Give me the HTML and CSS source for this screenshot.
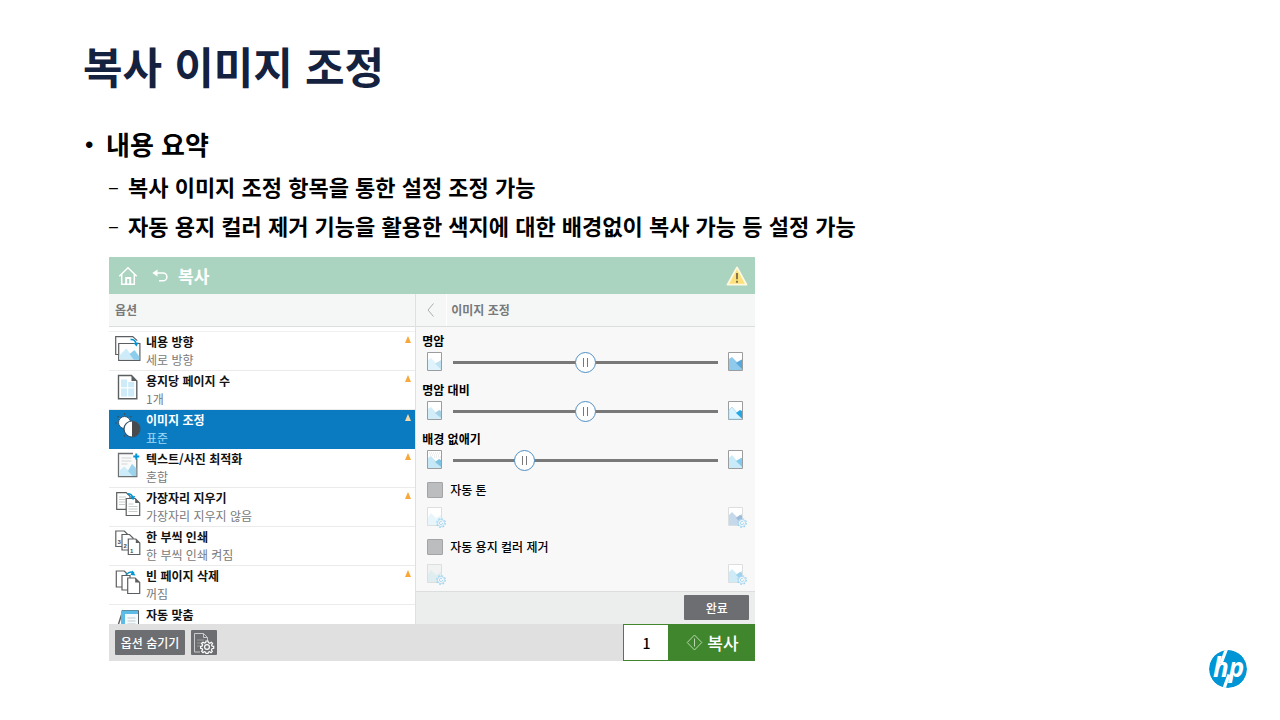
FILE: index.html
```html
<!DOCTYPE html>
<html lang="ko">
<head>
<meta charset="utf-8">
<title>복사 이미지 조정</title>
<link rel="stylesheet" href="styles.css">
</head>
<body>
<svg class="defs" aria-hidden="true">
  <symbol id="gear" viewBox="0 0 10 10">
    <circle cx="5" cy="5" r="4.3" fill="none" stroke="#9bd3f0" stroke-width="1.2" stroke-dasharray="1.7 1.68"/>
    <circle cx="5" cy="5" r="3.5" fill="#f8f8f8" stroke="#9bd3f0" stroke-width=".7"/>
    <circle cx="5" cy="5" r="1.6" fill="none" stroke="#9bd3f0" stroke-width=".8" stroke-dasharray="8 2"/>
  </symbol>
</svg>
<main class="slide">
  <h1 class="title">복사 이미지 조정</h1>
  <ul class="outline">
    <li class="topic">내용 요약</li>
    <li>
      <ul class="points">
        <li class="point">복사 이미지 조정 항목을 통한 설정 조정 가능</li>
        <li class="point">자동 용지 컬러 제거 기능을 활용한 색지에 대한 배경없이 복사 가능 등 설정 가능</li>
      </ul>
    </li>
  </ul>

  <section class="panel">
    <header class="topbar">
      <button class="plain" aria-label="홈">
        <svg width="20" height="20" viewBox="0 0 20 20" fill="none" stroke="#fff" stroke-width="1.5"><path d="M1.3 10.2 10 1.8l8.700 8.400M3.700 8.500v9.700h12.600V8.500"/><path d="M8.200 18v-6h4v6" stroke-width="2"/></svg>
      </button>
      <button class="plain" aria-label="뒤로">
        <svg width="16" height="14" viewBox="0 0 16 14"><path d="M4 4h7a3.900 3.900 0 0 1 0 7.800H7" fill="none" stroke="#fff" stroke-width="1.500"/><path d="M5.500.500v7L.300 4z" fill="#fff"/></svg>
      </button>
      <h2 class="topbar-title">복사</h2>
      <svg class="alert" width="22" height="20" viewBox="0 0 22 20"><path d="M11 1.500 20.500 18.700h-19z" fill="#fde17c" stroke="#fff8dc" stroke-width="1.800" stroke-linejoin="round"/><path d="M11 7v6.200M11 14.700v2" stroke="#7a6a45" stroke-width="1.800"/></svg>
    </header>

    <div class="columns">
      <div class="left">
        <h3 class="subhead">옵션</h3>
        <ul class="options">
          <li><button class="option"><svg class="icon" viewBox="0 0 26 32"><g stroke="#5c5f61" stroke-width="1.200"><path d="M3.500 19.500H.700V1.600h17l4.500 4" fill="#fff"/><path d="M3.700 8.500h21.200v16.800H3.700z" fill="#fff"/></g><path d="m4.400 20.500 7-7 8 11.100h-15z" fill="#cdebf8"/><path d="m14.500 19 5-4 4.800 6.500v3.200h-5.500z" fill="#8ecdeb"/><path d="M15.500 4.500q4.500-.500 5.500 4" fill="none" stroke="#0096d6" stroke-width="1.500"/><path d="m18.500 8 5-.500-2 4z" fill="#0096d6"/></svg>
            <span class="option-text"><b>내용 방향</b><span>세로 방향</span></span><i class="mark"></i></button></li>
          <li><button class="option"><svg class="icon" viewBox="0 0 26 32"><path d="M3.500 1.500h13l5.300 5.500v17.800H3.500z" fill="#fff" stroke="#5c5f61" stroke-width="1.400"/><path d="M16.500 1.500V7h5.300z" fill="#5c5f61"/><path d="M6 5.500h6v7.800H6zM13.200 8h6v5.300h-6zM6 14.500h6v8H6zM13.200 14.500h6v8h-6z" fill="#cdebf8"/></svg>
            <span class="option-text"><b>용지당 페이지 수</b><span>1개</span></span><i class="mark"></i></button></li>
          <li><button class="option selected"><svg class="icon" viewBox="0 0 26 32"><path d="M9.500 0v24M0 10h20M2.500 3l14 14M16.500 3l-14 14" stroke="#34536a" stroke-width="1.200" stroke-dasharray="2 20"/><circle cx="9.500" cy="9.500" r="6" fill="#fff" stroke="#34536a"/><circle cx="17" cy="16" r="8" fill="#fff" stroke="#34536a" stroke-width="1.200"/><path d="M17 8a8 8 0 0 1 0 16z" fill="#484b4d"/></svg>
            <span class="option-text"><b>이미지 조정</b><span>표준</span></span><i class="mark"></i></button></li>
          <li><button class="option"><svg class="icon" viewBox="0 0 26 32"><path d="M18 1.500H3.500v23.200h18.300V7" fill="#fafafa" stroke="#6d7072" stroke-width="1.300"/><path d="M6.500 6h10M6.500 9h10M6.500 12h6" stroke="#d2d5d6"/><path d="m4.200 19 5-4.500 4 4 4-6.500 4 4v8h-17z" fill="#cdebf8"/><path d="m13 19 4-7 4 4.500v7.500h-3.500z" fill="#9bd3ee"/><path d="M21.300 1.500v6M18.300 4.500h6" stroke="#0096d6" stroke-width="2"/></svg>
            <span class="option-text"><b>텍스트/사진 최적화</b><span>혼합</span></span><i class="mark"></i></button></li>
          <li><button class="option"><svg class="icon" viewBox="0 0 26 32"><g fill="#fff" stroke="#5c5f61" stroke-width="1.200"><path d="M1.700 1.600h9.500l3.800 3.700v13H1.700z"/><path d="M11.200 7.500h9l4.500 4.500v12.500H11.200z"/></g><path d="M20.200 7.500V12h4.500z" fill="#5c5f61"/><path d="M4 6h7M4 8.500h6M4 11h6M4 13.500h6M13.500 13h5M13.500 15.500h9M13.500 18h9M13.500 20.500h9" stroke="#c9cccd"/><path d="M12.500 2.800q4.500 0 5.200 3.800" fill="none" stroke="#0096d6" stroke-width="1.500"/><path d="m15 5.500 5.200-.500-2 4.200z" fill="#0096d6"/></svg>
            <span class="option-text"><b>가장자리 지우기</b><span>가장자리 지우지 않음</span></span><i class="mark"></i></button></li>
          <li><button class="option"><svg class="icon" viewBox="0 0 26 32"><g fill="#fff" stroke="#5c5f61" stroke-width="1.200"><path d="M.800 1h8.500l3 3v12.500H.800z"/><path d="M7 4.500h7.500l3.500 3.500v12H7z"/><path d="M13.300 9h7.500l4 4v11.500H13.300z"/></g><path d="M20.800 9v4h4z" fill="#5c5f61"/><g class="digits"><text x="2.500" y="14">3</text><text x="8.500" y="18">2</text><text x="15" y="22.500">1</text></g></svg>
            <span class="option-text"><b>한 부씩 인쇄</b><span>한 부씩 인쇄 켜짐</span></span></button></li>
          <li><button class="option"><svg class="icon" viewBox="0 0 26 32"><g fill="#fff" stroke="#5c5f61" stroke-width="1.200"><path d="M1.300 2h8l2 2v14h-10z"/><path d="M7 6.500h8v14.500H7z"/><path d="M12.700 9h7.500l4.500 4.500v11h-12z"/></g><path d="M20.200 9v4.500h4.500z" fill="#5c5f61"/><path d="M11.500 5.500q3.500-4 7.500-1.500" fill="none" stroke="#0096d6" stroke-width="1.500"/><path d="m17.500 1.500 3 5-5-.500z" fill="#0096d6"/></svg>
            <span class="option-text"><b>빈 페이지 삭제</b><span>꺼짐</span></span><i class="mark"></i></button></li>
          <li><button class="option"><svg class="icon" viewBox="0 0 26 32"><path d="M1 24 8 2" stroke="#5c5f61" stroke-width="1.400"/><path d="M7.500 2.500h16v22h-16z" fill="#f4fbfe" stroke="#5c5f61"/><path d="M6 2.500h17v3.500H10v18H6z" fill="#5bbce8"/><path d="M12.500 10h8M12.500 13h8M12.500 16h8" stroke="#c3c7c9"/></svg>
            <span class="option-text"><b>자동 맞춤</b></span></button></li>
        </ul>
      </div>

      <div class="right">
        <div class="subhead">
          <button class="back" aria-label="이전"><svg width="8" height="14" viewBox="0 0 8 14"><path d="M6.500.500 1 7l5.500 6.500" fill="none" stroke="#aaadaf"/></svg></button>
          <h3 class="subhead-title">이미지 조정</h3>
        </div>
        <div class="settings">
          <div class="setting">
            <label for="light">명암</label>
            <div class="slide-row">
              <svg class="pic" viewBox="0 0 16 20"><path d="M.500.500h14v18H.500z" class="page"/><path d="m1 8 3-2 5 5 2-1 3-1v9H1z" fill="#e0f3fc"/><path d="m8 11.500 3-1.500 3-2v9.500z" fill="#c0e2f2"/></svg>
              <input id="light" type="range" min="0" max="100" value="50">
              <svg class="pic" viewBox="0 0 16 20"><path d="M.500.500h14v18H.500z" class="page"/><path d="m1 7 3-2 5 5 5-2v10H1z" fill="#8fc9ec"/><path d="m8 11 4-2.500 2-1V17z" fill="#57a9dc"/></svg>
            </div>
          </div>
          <div class="setting">
            <label for="contrast">명암 대비</label>
            <div class="slide-row">
              <svg class="pic" viewBox="0 0 16 20"><path d="M.500.500h14v18H.500z" class="page"/><path d="m1 8 3-2 10 11v1H1z" fill="#d2edf8"/><path d="m8 12 4-3 2 1v7z" fill="#a5d1e7"/></svg>
              <input id="contrast" type="range" min="0" max="100" value="50">
              <svg class="pic" viewBox="0 0 16 20"><path d="M.500.500h14v18H.500z" class="page"/><path d="m1 9 3-3 10 12H1z" fill="#d9f3ff" stroke="#9bd7f3" stroke-width=".700"/><path d="m8 12 4-3 2 1v7.500z" fill="#23a7e5"/></svg>
            </div>
          </div>
          <div class="setting">
            <label for="background">배경 없애기</label>
            <div class="slide-row">
              <svg class="pic" viewBox="0 0 16 20"><path d="M.500.500h14v18H.500z" class="page"/><path d="M2 3h11M3 5h10M7 7h7" stroke="#dedede" stroke-dasharray="1 1"/><path d="m1 8 3-2 10 11v1H1z" fill="#c5e8f7"/><path d="m8 12 4-3 2 1v7z" fill="#7fc3e2"/></svg>
              <input id="background" type="range" min="0" max="100" value="25">
              <svg class="pic" viewBox="0 0 16 20"><path d="M.500.500h14v18H.500z" class="page"/><path d="m1 8 3-3 10 12v1H1z" fill="#c9eaf9"/><path d="m8 11 5-3 1 0v9z" fill="#83cbec"/></svg>
            </div>
          </div>
          <div class="check">
            <label class="check-label"><input type="checkbox">자동 톤</label>
            <div class="pair">
              <svg class="pic" viewBox="0 0 16 20"><path d="M.500.500h14v18H.500z" class="page faint"/><path d="m1 10 3-4 5 5 5-3v10H1z" fill="#e8f5fa"/><use href="#gear" x="9" y="11" width="10" height="10"/></svg>
              <svg class="pic" viewBox="0 0 16 20"><path d="M.500.500h14v18H.500z" class="page faint"/><path d="m1 8 3-3 5 5 5-3v11H1z" fill="#c6d9ea"/><path d="m8 11 4-3 2 1v8z" fill="#9dbada"/><use href="#gear" x="9" y="11" width="10" height="10"/></svg>
            </div>
          </div>
          <div class="check">
            <label class="check-label"><input type="checkbox">자동 용지 컬러 제거</label>
            <div class="pair">
              <svg class="pic" viewBox="0 0 16 20"><path d="M.500.500h14v18H.500z" class="page faint tint"/><path d="m1 10 3-4 5 5 5-3v10H1z" fill="#dfecf0"/><use href="#gear" x="9" y="11" width="10" height="10"/></svg>
              <svg class="pic" viewBox="0 0 16 20"><path d="M.500.500h14v18H.500z" class="page faint"/><path d="m1 8 3-3 5 5 5-3v11H1z" fill="#cfebf8"/><path d="m8 11 4-3 2 1v8z" fill="#9cd2ee"/><use href="#gear" x="9" y="11" width="10" height="10"/></svg>
            </div>
          </div>
        </div>
        <div class="done-bar"><button class="dark done">완료</button></div>
      </div>
    </div>

    <footer class="bottombar">
      <div class="tools">
        <button class="dark hide">옵션 숨기기</button>
        <button class="dark gear-button" aria-label="설정">
          <svg width="22" height="22" viewBox="0 0 22 22" fill="none" stroke="#fff"><path d="M7 20H1.500V1.500h9l4 4V9M10.500 1.500v4h4" stroke="#c9cacb"/><path d="M4 8h7M4 11h5M4 14h3" stroke="#98999b"/><g transform="translate(14 15)"><path d="M-1-6h2l.400 1.600 1.400.600L4.300-4.800 5.600-3.400 4.600-2l.500 1.200L6.700-.600v1.900l-1.700.400L4.400 3l.900 1.400L4 5.700l-1.400-1L1.300 5.200 1 6.500h-2l-.300-1.400-1.300-.500-1.400 1-1.400-1.400 1-1.300-.600-1.300-1.400-.300v-1.900L-4.900-.900l.500-1.200-1-1.500L-4-4.800l1.400.900 1.300-.500z" fill="#6d6e71" stroke-width="1.200"/><circle r="2.400" stroke-width="1.200"/></g></svg>
        </button>
      </div>
      <input class="copies" type="text" value="1" aria-label="매수">
      <button class="start"><svg width="17" height="17" viewBox="0 0 17 17" fill="none" stroke="#b9d8b2"><path d="m8.500 1 7.300 7.500-7.300 7.500-7.300-7.500zM8.500 4.500v8"/></svg>복사</button>
    </footer>
  </section>

  <svg class="logo" width="38" height="38" viewBox="0 0 38 38" role="img" aria-label="hp">
    <circle cx="19" cy="19" r="19" fill="#0096d6"/>
    <path d="M17.500-1 12 13.500M20 24.500 14.800 39" stroke="#fff" stroke-width="3.200"/>
    <text x="4" y="27">hp</text>
  </svg>
</main>
</body>
</html>
```
FILE: styles.css
```css
* { box-sizing: border-box; }
body {
  margin: 0;
  background: #fff;
  color: #000;
  font-family: "Noto Sans CJK KR", sans-serif;
}
h1, h2, h3, ul { margin: 0; padding: 0; }
ul { list-style: none; }
button, input { font-family: inherit; }
button { border: 0; padding: 0; cursor: pointer; }
svg { flex: none; display: block; }
.defs { display: none; }

.slide {
  position: relative;
  min-height: 100vh;
  padding: 35px 33px 32px 83px;
}
.title {
  font-size: 43px;
  line-height: 60px;
  font-weight: 700;
  color: #14213f;
}
.outline { padding-top: 29px; }
.topic, .point { display: flex; font-weight: 700; }
.topic { font-size: 26px; line-height: 40px; }
.topic::before { content: "•"; width: 21px; padding: 2px 0 0 2px; font-family: "Liberation Sans", sans-serif; font-size: 24px; line-height: 38px; font-weight: 400; }
.point { font-size: 22px; line-height: 39px; }
.points { padding: 3px 0 0 26px; }
.point::before { content: "–"; width: 19px; padding-top: 3px; font-family: "Liberation Sans", sans-serif; font-size: 16px; line-height: 36px; font-weight: 400; }

.panel {
  width: 50.5vw;
  min-width: 480px;
  margin: 12px 0 0 26px;
  font-size: 12px;
  line-height: 18px;
}
.topbar {
  display: flex;
  align-items: center;
  height: 37px;
  padding: 0 7px 0 9px;
  gap: 14px;
  background: #abd4c0;
  color: #fff;
}
.plain { background: none; }
.topbar-title { flex: 1; font-size: 17px; line-height: 24px; margin-left: -4px; }

.columns { display: grid; grid-template-columns: 9fr 10fr; }
.left { display: flex; flex-direction: column; }
.subhead {
  display: flex;
  align-items: center;
  height: 33px;
  border-bottom: 1px solid #dcdedd;
  background: #f5f7f6;
  color: #77797a;
  font-size: 12px;
  font-weight: 700;
}
.left .subhead { padding-left: 6px; }
.options { flex: 1; contain: size; overflow: hidden; padding-top: 4px; }
.options li:first-child { border-top: 1px solid #f0f0f0; }
.option {
  display: flex;
  align-items: center;
  width: 100%;
  height: 39px;
  padding: 0 4px 0 6px;
  gap: 5px;
  border-bottom: 1px solid #ebebeb;
  background: #fff;
  color: #111;
  font-size: 12px;
  line-height: 18px;
  text-align: left;
}
.icon { width: 26px; height: 32px; }
.digits { font: 700 6px "Liberation Sans", sans-serif; fill: #484b4d; }
.option-text { flex: 1; display: flex; flex-direction: column; min-height: 36px; }
.option-text span { color: #77797a; }
.selected { background: #0a7bc1; border-color: #0a7bc1; color: #fff; }
.option.selected .option-text span { color: #9fdcf8; }
.mark {
  align-self: flex-start;
  margin-top: 4px;
  border: 3px solid transparent;
  border-top: 0;
  border-bottom: 7px solid #f8a838;
}
.selected .mark { border-bottom-color: #f6d9a5; }

.right { display: flex; flex-direction: column; border-left: 1px solid #dfe1e1; background: #f8f8f8; }
.back {
  display: flex;
  align-items: center;
  justify-content: center;
  align-self: stretch;
  width: 31px;
  border-right: 1px solid #fff;
  background: none;
}
.subhead-title { font-size: 12px; margin-left: 4px; }
.settings { display: flex; flex-direction: column; gap: 7px; padding: 5px 6px; }
.setting label { display: block; font-weight: 700; }
.slide-row, .pair { display: flex; align-items: center; height: 24px; padding: 0 5px; gap: 10px; }
.pair { justify-content: space-between; }
.pic { width: 16px; height: 20px; overflow: visible; }
.page { fill: #fff; stroke: #9a9c9e; }
.faint { stroke: #dcdfe0; }
.tint { fill: #f1f2f2; }
input[type="range"] {
  appearance: none;
  flex: 1;
  min-width: 0;
  height: 22px;
  margin: 0;
  background: linear-gradient(#797979, #797979) center / 100% 3px no-repeat;
}
input[type="range"]::-webkit-slider-thumb {
  appearance: none;
  width: 21px;
  height: 21px;
  border: 1px solid #4f8fc4;
  border-radius: 50%;
  background:
    linear-gradient(#77797a, #77797a) 7px 5px / 1px 9px no-repeat,
    linear-gradient(#77797a, #77797a) 11px 5px / 1px 9px no-repeat,
    #fff;
}
.check { display: flex; flex-direction: column; gap: 6px; padding-top: 2px; }
.check-label { display: flex; align-items: center; gap: 7px; padding-left: 5px; font-weight: 500; }
input[type="checkbox"] {
  appearance: none;
  width: 16px;
  height: 16px;
  margin: 0;
  border: 1px solid #a3a4a6;
  border-radius: 1px;
  background: #bcbdbf;
}
.done-bar {
  display: flex;
  justify-content: flex-end;
  padding: 3px 6px 4px;
  border-top: 1px solid #dcdedd;
  background: #eceeed;
}
.dark { height: 25px; border-radius: 1px; background: #6d6e71; color: #fff; font-size: 12px; line-height: 18px; font-weight: 500; }
.done { width: 65px; }

.bottombar { display: flex; height: 37px; background: #e0e0e0; }
.tools { display: flex; flex: 1; align-items: center; gap: 6px; padding-left: 6px; }
.hide { width: 70px; }
.gear-button { display: flex; align-items: center; justify-content: center; width: 26px; }
.copies {
  width: 46px;
  border: 1px solid #3f862c;
  background: #fff;
  font-size: 14px;
  font-weight: 500;
  text-align: center;
}
.start {
  display: flex;
  align-items: center;
  justify-content: center;
  gap: 4px;
  width: 86px;
  background: #3f862c;
  color: #fff;
  font-size: 17px;
  line-height: 24px;
  font-weight: 500;
}

.logo { position: absolute; right: 33px; bottom: 32px; border-radius: 50%; }
.logo text { font: italic 700 26px "Open Sans", "Liberation Sans", sans-serif; fill: #fff; }
```
